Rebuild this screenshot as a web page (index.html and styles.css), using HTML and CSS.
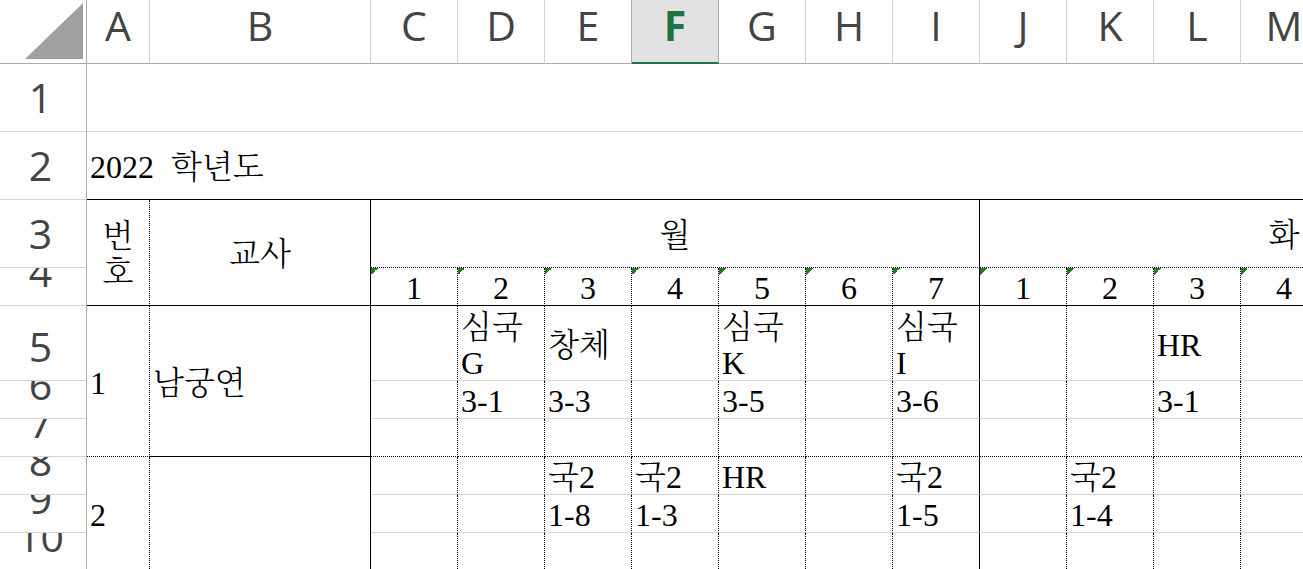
FILE: index.html
```html
<!DOCTYPE html>
<html lang="ko">
<head>
<meta charset="utf-8">
<title>2022 학년도 시간표</title>
<link rel="stylesheet" href="styles.css">
</head>
<body>
<div class="sheet">
  <!-- column headers -->
  <div class="corner"><svg width="58" height="56" viewBox="0 0 58 56"><polygon points="0,56 58,56 58,0" fill="#a0a0a0"/></svg></div>
  <div class="col">A</div><div class="col">B</div><div class="col">C</div><div class="col">D</div>
  <div class="col">E</div><div class="col sel">F</div><div class="col">G</div><div class="col">H</div>
  <div class="col">I</div><div class="col">J</div><div class="col">K</div><div class="col">L</div>
  <div class="col">M</div><div class="col">N</div><div class="col">O</div><div class="col">P</div>

  <!-- row 1 -->
  <div class="rh">1</div>
  <div class="c wide"></div>

  <!-- row 2 -->
  <div class="rh">2</div>
  <div class="c wide sb mid title">2022 학년도</div>

  <!-- row 3 -->
  <div class="rh">3</div>
  <div class="c r2 dr sb mid ctr"><span>번<br>호</span></div>
  <div class="c r2 sr sb mid ctr">교사</div>
  <div class="c s7 sr db mid ctr">월</div>
  <div class="c s7 db mid ctr">화</div>

  <!-- row 4 -->
  <div class="rh">4</div>
  <div class="c dr sb ctr num">1</div><div class="c dr sb ctr num">2</div><div class="c dr sb ctr num">3</div>
  <div class="c dr sb ctr num">4</div><div class="c dr sb ctr num">5</div><div class="c dr sb ctr num">6</div>
  <div class="c sr sb ctr num">7</div>
  <div class="c dr sb ctr num">1</div><div class="c dr sb ctr num">2</div><div class="c dr sb ctr num">3</div>
  <div class="c dr sb ctr num">4</div><div class="c dr sb ctr num">5</div><div class="c dr sb ctr num">6</div>
  <div class="c dr sb ctr num">7</div>

  <!-- row 5 -->
  <div class="rh">5</div>
  <div class="c r3 dr db mid">1</div>
  <div class="c r3 sr sb mid">남궁연</div>
  <div class="c dr mid"></div>
  <div class="c dr mid"><span>심국<br>G</span></div>
  <div class="c dr mid">창체</div>
  <div class="c dr mid"></div>
  <div class="c dr mid"><span>심국<br>K</span></div>
  <div class="c dr mid"></div>
  <div class="c sr mid"><span>심국<br>I</span></div>
  <div class="c dr mid"></div>
  <div class="c dr mid"></div>
  <div class="c dr mid">HR</div>
  <div class="c dr mid"></div>
  <div class="c dr mid"></div>
  <div class="c dr mid"></div>
  <div class="c dr mid"></div>

  <!-- row 6 -->
  <div class="rh">6</div>
  <div class="c dr"></div>
  <div class="c dr">3-1</div>
  <div class="c dr">3-3</div>
  <div class="c dr"></div>
  <div class="c dr">3-5</div>
  <div class="c dr"></div>
  <div class="c sr">3-6</div>
  <div class="c dr"></div>
  <div class="c dr"></div>
  <div class="c dr">3-1</div>
  <div class="c dr"></div>
  <div class="c dr"></div>
  <div class="c dr"></div>
  <div class="c dr"></div>

  <!-- row 7 -->
  <div class="rh">7</div>
  <div class="c dr db"></div><div class="c dr db"></div><div class="c dr db"></div>
  <div class="c dr db"></div><div class="c dr db"></div><div class="c dr db"></div>
  <div class="c sr db"></div>
  <div class="c dr db"></div><div class="c dr db"></div><div class="c dr db"></div>
  <div class="c dr db"></div><div class="c dr db"></div><div class="c dr db"></div>
  <div class="c dr db"></div>

  <!-- row 8 -->
  <div class="rh">8</div>
  <div class="c r3 dr mid">2</div>
  <div class="c r3 sr"></div>
  <div class="c dr"></div>
  <div class="c dr"></div>
  <div class="c dr">국2</div>
  <div class="c dr">국2</div>
  <div class="c dr">HR</div>
  <div class="c dr"></div>
  <div class="c sr">국2</div>
  <div class="c dr"></div>
  <div class="c dr">국2</div>
  <div class="c dr"></div>
  <div class="c dr"></div>
  <div class="c dr"></div>
  <div class="c dr"></div>
  <div class="c dr"></div>

  <!-- row 9 -->
  <div class="rh">9</div>
  <div class="c dr"></div>
  <div class="c dr"></div>
  <div class="c dr">1-8</div>
  <div class="c dr">1-3</div>
  <div class="c dr"></div>
  <div class="c dr"></div>
  <div class="c sr">1-5</div>
  <div class="c dr"></div>
  <div class="c dr">1-4</div>
  <div class="c dr"></div>
  <div class="c dr"></div>
  <div class="c dr"></div>
  <div class="c dr"></div>
  <div class="c dr"></div>

  <!-- row 10 -->
  <div class="rh">10</div>
  <div class="c dr"></div><div class="c dr"></div><div class="c dr"></div>
  <div class="c dr"></div><div class="c dr"></div><div class="c dr"></div>
  <div class="c sr"></div>
  <div class="c dr"></div><div class="c dr"></div><div class="c dr"></div>
  <div class="c dr"></div><div class="c dr"></div><div class="c dr"></div>
  <div class="c dr"></div>
</div>
</body>
</html>
```

FILE: styles.css
```css
* { box-sizing: border-box; }

html, body {
  margin: 0;
  padding: 0;
  overflow: hidden;
  background: #fff;
}

.sheet {
  display: grid;
  grid-template-columns: 87px 63px 221px repeat(14, 87px);
  grid-template-rows: 64px 68px 68px 68px 38px 75px 38px 38px 38px 38px 38px;
  width: max-content;
}

.corner {
  border-right: 1px solid #ababab;
  border-bottom: 1px solid #ababab;
  display: flex;
  justify-content: flex-end;
  align-items: flex-end;
  padding: 0 3px 4px 0;
}
.corner svg { display: block; }

.col {
  border-right: 1px solid #d4d4d4;
  border-bottom: 1px solid #ababab;
  padding-top: 5px;
  text-align: center;
  font: 400 41px/41px "Open Sans", "Noto Sans", sans-serif;
  color: #444;
  overflow: hidden;
}
.col.sel {
  background: #e1e1e1;
  color: #217346;
  font-weight: 700;
  border-right-color: #ababab;
  border-bottom: 2px solid #217346;
  box-shadow: -1px 0 0 #ababab;
}

.rh {
  border-right: 1px solid #ababab;
  border-bottom: 1px solid #d4d4d4;
  display: flex;
  justify-content: center;
  align-items: flex-end;
  padding: 0 5px 13px 0;
  overflow: hidden;
  font: 400 41px/41px "Open Sans", "Noto Sans", sans-serif;
  color: #444;
}

.c {
  border-right: 1px solid #d4d4d4;
  border-bottom: 1px solid #d4d4d4;
  display: flex;
  flex-direction: column;
  justify-content: flex-end;
  padding: 0 3px;
  overflow: hidden;
  white-space: nowrap;
  font: 300 32px/34px "Liberation Serif", "Noto Serif CJK KR", "Noto Sans CJK KR", serif;
  color: #000;
}

.mid {
  justify-content: center;
  padding-top: 3px;
  line-height: 36px;
}
.ctr { text-align: center; }
.title { word-spacing: 9px; }

.dr { border-right: 1px dotted #000; }
.sr { border-right: 1px solid #000; }
.db { border-bottom: 1px dotted #000; }
.sb { border-bottom: 1px solid #000; }

.num {
  background: linear-gradient(to bottom right, #1e7e1e 50%, transparent 50%) 0 0 / 7px 7px no-repeat;
}

.wide { grid-column: span 16; }
.s7 { grid-column: span 7; }
.r2 { grid-row: span 2; }
.r3 { grid-row: span 3; }
```
